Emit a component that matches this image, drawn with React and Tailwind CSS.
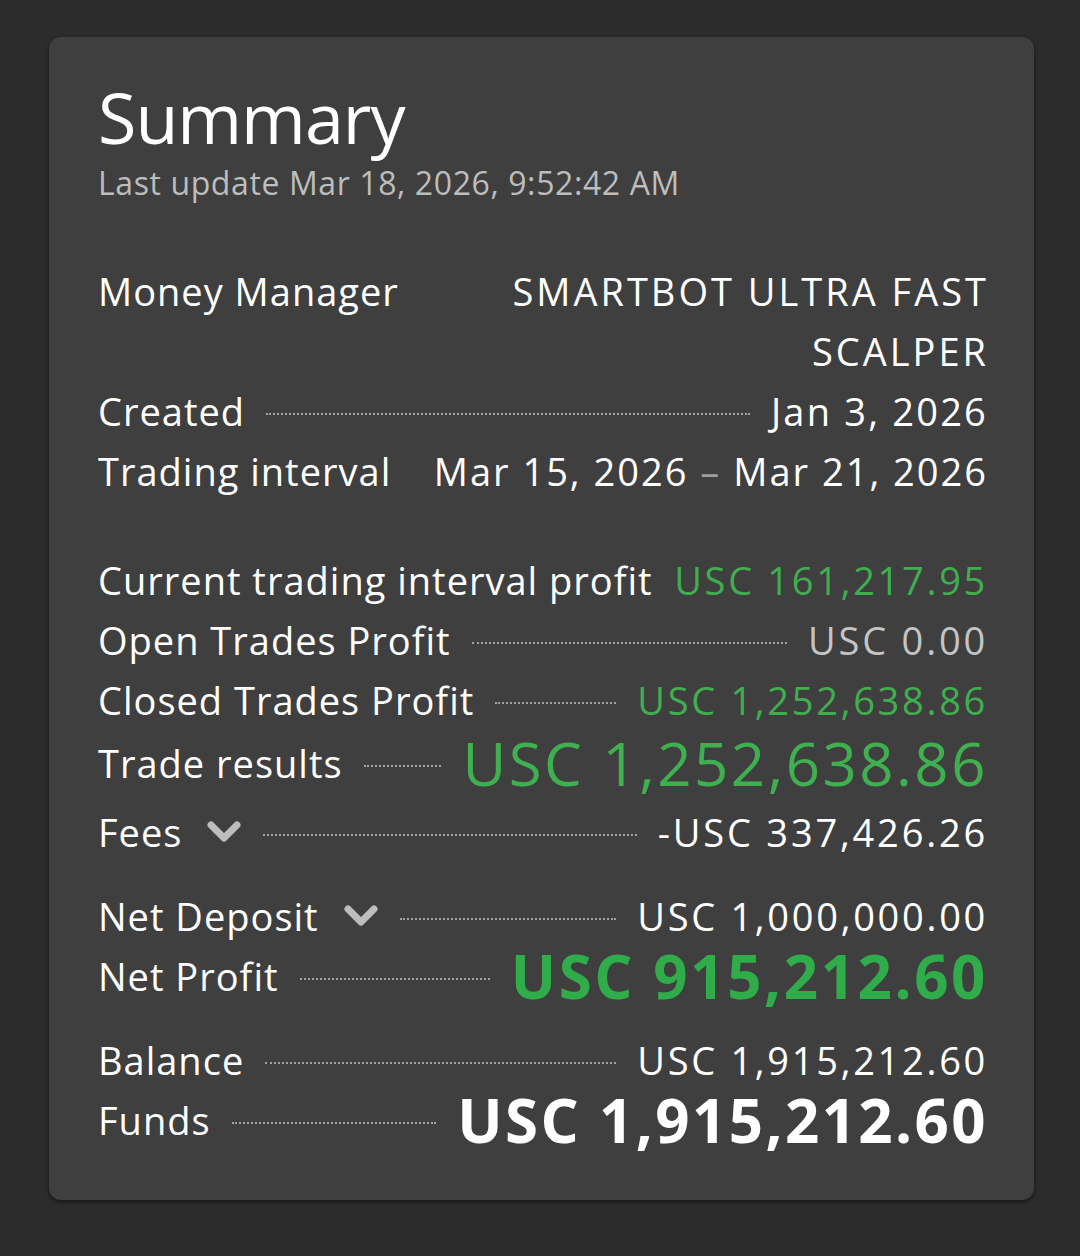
import React from 'react';

const Leader = () => (
  <div className="flex-1 mx-[21px] h-0 border-b-2 border-dotted border-[#a3a3a3] translate-y-[3px]" />
);

const Chevron = () => (
  <svg viewBox="0 0 36 24" className="w-[36px] h-[24px] ml-[24px] shrink-0">
    <path d="M5 5 L18 18 L31 5" fill="none" stroke="#bdbdbd" strokeWidth="7" strokeLinecap="round" strokeLinejoin="round" />
  </svg>
);

function Row({ label, value, chevron, valueClass = 'text-white tracking-[2.7px]', rowClass = 'h-[60px]', leader = true }) {
  return (
    <div className={`flex items-center ${rowClass}`}>
      <div className="flex items-center shrink-0 text-white">
        <span>{label}</span>
        {chevron && <Chevron />}
      </div>
      {leader ? <Leader /> : <div className="flex-1" />}
      <div className={`shrink-0 whitespace-nowrap -mr-[2px] ${valueClass}`}>{value}</div>
    </div>
  );
}

export default function App() {
  return (
    <div className="min-h-[1256px] bg-[#2c2c2c] pt-[37px] pl-[49px] pr-[46px]" style={{ fontFamily: '"Open Sans", "Noto Sans", sans-serif' }}>
      <div className="bg-[#3f3f3f] rounded-[12px] shadow-[0_2px_4px_rgba(0,0,0,0.5)] pl-[49px] pr-[48px] pt-[40px] h-[1163px] text-[38px] leading-[60px] tracking-[1px]">
        <h1 className="text-[70px] leading-[80px] text-white font-normal tracking-[-1px]">Summary</h1>
        <div className="text-[32px] leading-[40px] text-[#bdbdbd] mt-[6px] tracking-[0.6px]">Last update Mar 18, 2026, 9:52:42 AM</div>

        <div className="mt-[58px]">
          <div className="flex justify-between text-white">
            <span className="shrink-0">Money Manager</span>
            <span className="text-right w-[500px] tracking-[3px] -mr-[3px]">SMARTBOT ULTRA FAST SCALPER</span>
          </div>
          <Row label="Created" value="Jan 3, 2026" valueClass="text-white tracking-[2.2px]" />
          <Row
            label="Trading interval"
            leader={false}
            valueClass="text-white tracking-[2px]"
            value={
              <span>
                Mar 15, 2026 <span className="text-[#9e9e9e]">–</span> Mar 21, 2026
              </span>
            }
          />
        </div>

        <div className="mt-[49px]">
          <Row label="Current trading interval profit" leader={false} value="USC 161,217.95" valueClass="text-[#3fae4f] tracking-[2.7px]" />
          <Row label="Open Trades Profit" value="USC 0.00" valueClass="text-[#c4c4c4] tracking-[2.8px]" />
          <Row label="Closed Trades Profit" value="USC 1,252,638.86" valueClass="text-[#3fae4f] tracking-[2.7px]" />
          <Row
            label="Trade results"
            value="USC 1,252,638.86"
            rowClass="h-[66px]"
            valueClass="text-[#3fb04f] text-[60px] leading-[66px] tracking-[2.5px]"
          />
          <Row label="Fees" chevron value="-USC 337,426.26" rowClass="h-[60px] mt-[6px]" valueClass="text-white tracking-[2.8px]" />
        </div>

        <div className="mt-[24px]">
          <Row label="Net Deposit" chevron value="USC 1,000,000.00" />
          <Row
            label="Net Profit"
            value="USC 915,212.60"
            valueClass="text-[#30ad4a] font-bold text-[60px] leading-[60px] tracking-[2.6px]"
          />
        </div>

        <div className="mt-[24px]">
          <Row label="Balance" value="USC 1,915,212.60" />
          <Row
            label="Funds"
            value="USC 1,915,212.60"
            valueClass="text-white font-bold text-[60px] leading-[60px] tracking-[2.4px]"
          />
        </div>
      </div>
    </div>
  );
}
